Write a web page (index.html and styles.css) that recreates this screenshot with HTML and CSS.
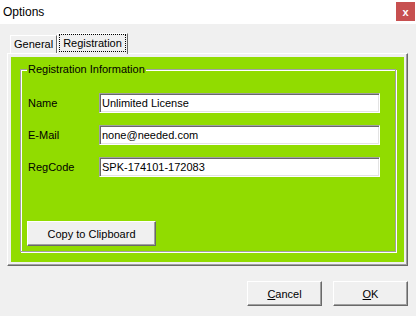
FILE: index.html
```html
<!DOCTYPE html>
<html lang="en">
<head>
  <meta charset="UTF-8" />
  <title>Options</title>
  <link rel="stylesheet" href="styles.css">
</head>
<body>
  <div class="titlebar">
    <span class="title">Options</span>
    <span class="close">x</span>
  </div>

  <div class="tabs">
    <div class="tab">General</div>
    <div class="tab active"><span class="focus">Registration</span></div>
  </div>

  <div class="panel">
    <div class="page">
      <fieldset class="group">
        <legend>Registration Information</legend>
        <div class="row">
          <label>Name</label>
          <input type="text" value="Unlimited License">
        </div>
        <div class="row">
          <label>E-Mail</label>
          <input type="text" value="none@needed.com">
        </div>
        <div class="row">
          <label>RegCode</label>
          <input type="text" value="SPK-174101-172083">
        </div>
        <button class="btn copy">Copy to Clipboard</button>
      </fieldset>
    </div>
  </div>

  <div class="actions">
    <button class="btn"><u>C</u>ancel</button>
    <button class="btn"><u>O</u>K</button>
  </div>
</body>
</html>
```

FILE: styles.css
```css
* {
  box-sizing: border-box;
}

body {
  margin: 0;
  width: 416px;
  height: 316px;
  overflow: hidden;
  background: #f0f0f0;
  font: 11px "Liberation Sans", Arial, sans-serif;
  color: #000;
}

.titlebar {
  height: 24px;
  background: #fff;
  display: flex;
  justify-content: space-between;
  align-items: flex-start;
}

.title {
  font-size: 12px;
  line-height: 14px;
  padding: 5px 0 0 3px;
}

.close {
  width: 19px;
  height: 19px;
  margin: 2px 1px 0 0;
  background: #c75050;
  color: #fff;
  font-weight: bold;
  font-size: 11px;
  display: flex;
  align-items: center;
  justify-content: center;
}

/* tab strip */
.tabs {
  display: flex;
  align-items: flex-end;
  height: 20px;
  margin: 9px 0 0 10px;
}

.tab {
  height: 18px;
  line-height: 17px;
  padding: 0 3px;
  border: 1px solid;
  border-color: #fff #696969 #696969 #fff;
  border-bottom: none;
  background: #f0f0f0;
}

.tab.active {
  position: relative;
  z-index: 1;
  height: 21px;
  margin-bottom: -1px;
  padding: 0 1px;
}

.focus {
  display: block;
  height: 18px;
  line-height: 16px;
  padding: 0 3px;
  border: 1px dotted #000;
}

.panel {
  margin: 0 8px 0 7px;
  padding: 3px;
  border: 1px solid;
  border-color: #fff #696969 #696969 #fff;
  box-shadow: inset -1px -1px 0 #a0a0a0;
}

.page {
  height: 205px;
  background: #91dc00;
  padding: 4px 8px 0 9px;
}

.group {
  margin: 0;
  padding: 16px 15px 5px 7px;
  border: 1px solid #a0a0a0;
  box-shadow: inset 1px 1px 0 #fff, 1px 1px 0 #fff;
  display: flex;
  flex-direction: column;
  gap: 12px;
}

.group legend {
  padding: 0 1px;
  margin-left: -1px;
  line-height: 16px;
  background: #91dc00;
}

.row {
  display: flex;
  align-items: center;
  height: 20px;
}

.row label {
  width: 71px;
}

.row input {
  flex: 1;
  height: 20px;
  padding: 0 2px;
  font: inherit;
  color: #000;
  background: #fff;
  border: 1px solid;
  border-color: #a0a0a0 #fff #fff #a0a0a0;
  box-shadow: inset 1px 1px 0 #696969, inset -1px -1px 0 #e3e3e3;
  outline: none;
}

.btn {
  width: 75px;
  height: 25px;
  padding: 0;
  font: inherit;
  color: #000;
  background: #f0f0f0;
  border: 1px solid;
  border-color: #fff #696969 #696969 #fff;
  box-shadow: inset -1px -1px 0 #a0a0a0;
}

.copy {
  width: 129px;
  margin: 32px 0 0 -1px;
}

.actions {
  display: flex;
  justify-content: flex-end;
  gap: 11px;
  padding: 15px 8px 0 0;
}
```
